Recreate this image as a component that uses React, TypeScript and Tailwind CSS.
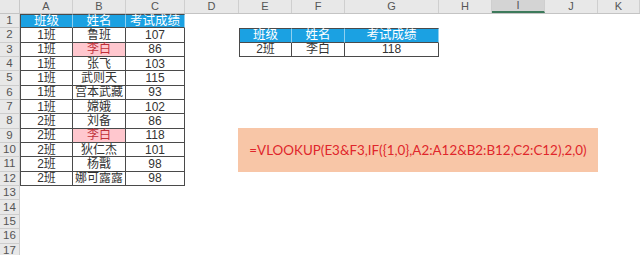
const colWidths = [
  "w-[53px]",
  "w-[53px]",
  "w-[59px]",
  "w-[54px]",
  "w-[53px]",
  "w-[53px]",
  "w-[94px]",
  "w-[53px]",
  "w-[53px]",
  "w-[53px]",
  "w-[42px]",
];
const letters = ["A", "B", "C", "D", "E", "F", "G", "H", "I", "J", "K"];

type Cell = { v: string; head?: boolean; pink?: boolean; table?: boolean; left?: boolean; top?: boolean };

const mainRows: [string, string, string, boolean?][] = [
  ["1班", "鲁班", "107"],
  ["1班", "李白", "86", true],
  ["1班", "张飞", "103"],
  ["1班", "武则天", "115"],
  ["1班", "宫本武藏", "93"],
  ["1班", "嫦娥", "102"],
  ["2班", "刘备", "86"],
  ["2班", "李白", "118", true],
  ["2班", "狄仁杰", "101"],
  ["2班", "杨戬", "98"],
  ["2班", "娜可露露", "98"],
];

const buildRows = (): Cell[][] => {
  const rows: Cell[][] = [];
  for (let r = 1; r <= 17; r++) {
    const row: Cell[] = letters.map(() => ({ v: "" }));
    if (r === 1) {
      ["班级", "姓名", "考试成绩"].forEach((t, i) => {
        row[i] = { v: t, head: true, table: true, left: i === 0, top: true };
      });
    } else if (r <= 12) {
      const d = mainRows[r - 2];
      row[0] = { v: d[0], table: true, left: true };
      row[1] = { v: d[1], table: true, pink: d[3] };
      row[2] = { v: d[2], table: true };
    }
    if (r === 2) {
      ["班级", "姓名", "考试成绩"].forEach((t, i) => {
        row[4 + i] = { v: t, head: true, table: true, left: i === 0, top: true };
      });
    }
    if (r === 3) {
      ["2班", "李白", "118"].forEach((t, i) => {
        row[4 + i] = { v: t, table: true, left: i === 0 };
      });
    }
    rows.push(row);
  }
  return rows;
};

const App = () => {
  const rows = buildRows();

  return (
    <div
      className="relative w-[640px] h-[255px] overflow-hidden bg-white"
      style={{ fontFamily: '"Liberation Sans", "Noto Sans CJK SC", sans-serif' }}
    >
      {/* column headers */}
      <div className="flex h-[14px] bg-[#e8e8e8] border-b border-[#c4c4c4] text-[11px] leading-[13px] text-[#555]">
        <div className="w-[20px] border-r border-[#c8c8c8]" />
        {letters.map((l, i) => (
          <div
            key={l}
            className={`${colWidths[i]} shrink-0 flex items-center justify-center border-r border-[#cfcfcf] ${
              l === "I" ? "bg-[#d4d4d4] border-b-2 border-b-[#3d7a5b]" : ""
            }`}
          >
            {l}
          </div>
        ))}
      </div>

      {/* rows */}
      {rows.map((row, r) => (
        <div key={r} className="flex h-[14.35px]">
          <div className="w-[20px] shrink-0 flex items-center justify-center bg-[#e8e8e8] border-r border-b border-[#cdcdcd] text-[11.5px] text-[#555]">
            {r + 1}
          </div>
          {row.map((c, i) => (
            <div
              key={i}
              className={`${colWidths[i]} shrink-0 flex items-center justify-center whitespace-nowrap ${
                c.table ? "border-r border-b border-[#4a4a4a]" : ""
              } ${c.left ? "border-l" : ""} ${c.top ? "border-t" : ""} ${
                c.head
                  ? "bg-[#1ba1e2] text-white text-[12.5px] border-r-[#8fd0f0]"
                  : c.pink
                  ? "bg-[#ffc7ce] text-[#c0303a] text-[12px]"
                  : "text-[#333] text-[12px]"
              }`}
            >
              {c.v}
            </div>
          ))}
        </div>
      ))}

      {/* formula text box */}
      <div className="absolute left-[238px] top-[128px] w-[360px] h-[44px] bg-[#f8c6a7] flex items-center justify-center">
        <span
          className="text-[13.4px] text-[#e0262b]"
          style={{ fontFamily: "Lato, 'Open Sans', sans-serif" }}
        >
          =VLOOKUP(E3&amp;F3,IF({"{"}1,0{"}"},A2:A12&amp;B2:B12,C2:C12),2,0)
        </span>
      </div>
    </div>
  );
};

export default App;
